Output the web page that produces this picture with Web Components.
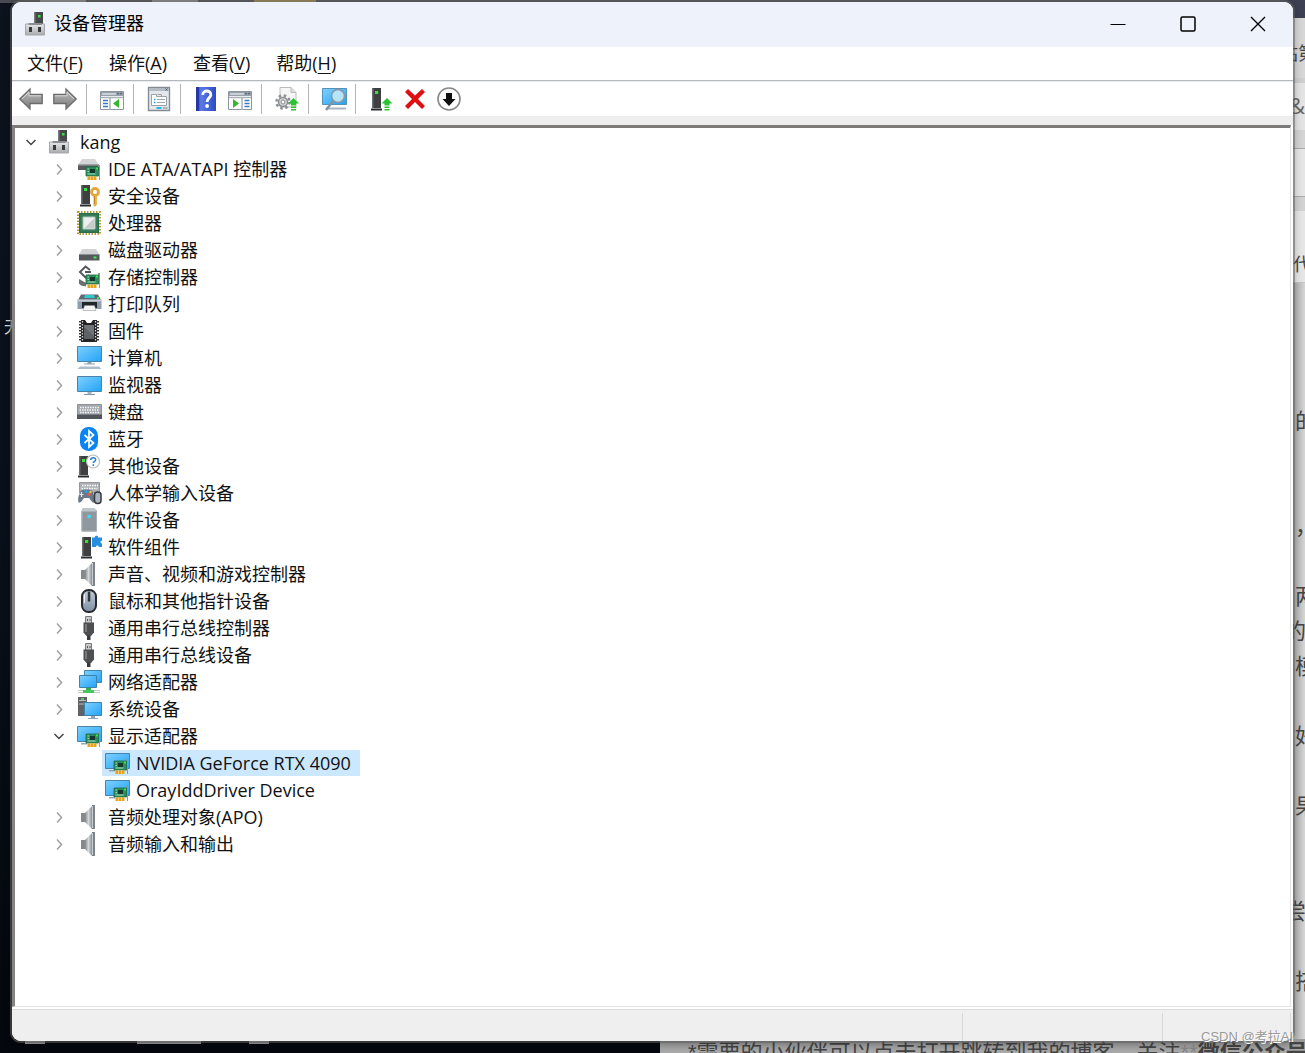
<!DOCTYPE html>
<html lang="zh-CN">
<head>
<meta charset="utf-8">
<title>设备管理器</title>
<style>
html,body{margin:0;height:100%;overflow:hidden}
body{font:18px/27px "Open Sans","Noto Sans CJK SC",sans-serif;color:#111}
</style>
</head>
<body>
<desk-top>
  <back-drop slot="behind"></back-drop>
  <app-window>
    <title-bar slot="title" heading="设备管理器"></title-bar>
    <menu-bar slot="menu">
      <menu-entry key="F">文件</menu-entry>
      <menu-entry key="A">操作</menu-entry>
      <menu-entry key="V">查看</menu-entry>
      <menu-entry key="H">帮助</menu-entry>
    </menu-bar>
    <tool-bar slot="tools">
      <tool-button icon="back" label="后退"></tool-button>
      <tool-button icon="forward" label="前进"></tool-button>
      <tool-split></tool-split>
      <tool-button icon="paneLeft" label="显示/隐藏控制台树"></tool-button>
      <tool-split></tool-split>
      <tool-button icon="props" label="属性"></tool-button>
      <tool-split></tool-split>
      <tool-button icon="help" label="帮助"></tool-button>
      <tool-button icon="paneRight" label="显示/隐藏操作窗格"></tool-button>
      <tool-split></tool-split>
      <tool-button icon="update" label="更新驱动程序"></tool-button>
      <tool-split></tool-split>
      <tool-button icon="scan" label="扫描检测硬件改动"></tool-button>
      <tool-split></tool-split>
      <tool-button icon="enable" label="启用设备"></tool-button>
      <tool-button icon="remove" label="卸载设备"></tool-button>
      <tool-button icon="disable" label="禁用设备"></tool-button>
    </tool-bar>
    <device-tree>
      <tree-node icon="pc" label="kang" state="open">
        <tree-node icon="ide" label="IDE ATA/ATAPI 控制器" state="closed"></tree-node>
        <tree-node icon="security" label="安全设备" state="closed"></tree-node>
        <tree-node icon="cpu" label="处理器" state="closed"></tree-node>
        <tree-node icon="disk" label="磁盘驱动器" state="closed"></tree-node>
        <tree-node icon="storage" label="存储控制器" state="closed"></tree-node>
        <tree-node icon="printer" label="打印队列" state="closed"></tree-node>
        <tree-node icon="firmware" label="固件" state="closed"></tree-node>
        <tree-node icon="computer" label="计算机" state="closed"></tree-node>
        <tree-node icon="monitor" label="监视器" state="closed"></tree-node>
        <tree-node icon="keyboard" label="键盘" state="closed"></tree-node>
        <tree-node icon="bluetooth" label="蓝牙" state="closed"></tree-node>
        <tree-node icon="other" label="其他设备" state="closed"></tree-node>
        <tree-node icon="hid" label="人体学输入设备" state="closed"></tree-node>
        <tree-node icon="soft" label="软件设备" state="closed"></tree-node>
        <tree-node icon="component" label="软件组件" state="closed"></tree-node>
        <tree-node icon="speaker" label="声音、视频和游戏控制器" state="closed"></tree-node>
        <tree-node icon="mouse" label="鼠标和其他指针设备" state="closed"></tree-node>
        <tree-node icon="usb" label="通用串行总线控制器" state="closed"></tree-node>
        <tree-node icon="usb" label="通用串行总线设备" state="closed"></tree-node>
        <tree-node icon="network" label="网络适配器" state="closed"></tree-node>
        <tree-node icon="system" label="系统设备" state="closed"></tree-node>
        <tree-node icon="display" label="显示适配器" state="open">
          <tree-node icon="display" label="NVIDIA GeForce RTX 4090" selected></tree-node>
          <tree-node icon="display" label="OrayIddDriver Device"></tree-node>
        </tree-node>
        <tree-node icon="speaker" label="音频处理对象(APO)" state="closed"></tree-node>
        <tree-node icon="speaker" label="音频输入和输出" state="closed"></tree-node>
      </tree-node>
    </device-tree>
    <status-bar slot="status"></status-bar>
  </app-window>
  <water-mark slot="over">CSDN @考拉AI</water-mark>
</desk-top>

<script>
const grads = `<defs>
<linearGradient id="b" x1="0" y1="0" x2="1" y2="1"><stop offset="0" stop-color="#7fd0ff"/><stop offset="1" stop-color="#22a3f5"/></linearGradient>
<linearGradient id="g" x1="0" y1="0" x2="0" y2="1"><stop offset="0" stop-color="#e6e7e9"/><stop offset="1" stop-color="#a9abae"/></linearGradient>
<linearGradient id="s" x1="0" y1="0" x2="1" y2="0"><stop offset="0" stop-color="#7f868c"/><stop offset=".5" stop-color="#d5d8da"/><stop offset="1" stop-color="#8a9095"/></linearGradient>
<linearGradient id="h" x1="0" y1="0" x2="1" y2="0"><stop offset="0" stop-color="#2334a0"/><stop offset=".25" stop-color="#5b7be6"/><stop offset="1" stop-color="#2c4bc4"/></linearGradient>
<linearGradient id="a" x1="0" y1="0" x2="0" y2="1"><stop offset="0" stop-color="#bdbdbd"/><stop offset="1" stop-color="#7b7b7b"/></linearGradient>
<linearGradient id="m" x1="0" y1="0" x2="0" y2="1"><stop offset="0" stop-color="#c3ccd8"/><stop offset="1" stop-color="#7d8fa5"/></linearGradient></defs>`;

const card = `<g><path d="M21 8h2v15h-1V10h-1z" fill="#8f979b"/><path d="M9 10h12.500v9H9z" fill="#2f8d5e" stroke="#1d6a45" stroke-width=".8"/><path d="M13 12h5v4h-5z" fill="#14382b"/><path d="M10.500 12h1.500M10.500 14.500h1.500M10.500 17h8" stroke="#a8dcbf"/><path d="M19 10.500h2v2h-2z" fill="#39e24f"/><path d="M10.500 19.500h9V23h-9z" fill="#e9a31c"/><path d="M13.500 19.500V23M16.500 19.500V23" stroke="#fbd98a" stroke-width=".8"/></g>`;
const tower = (x, y, h) => `<path d="M${x} ${y}h9v${h}h-9z" fill="#3d3f41"/><path d="M${x} ${y}h1.500v${h}h-1.500z" fill="#6b6d70"/><path d="M${x - 1} ${y + h + .5}h11v2h-11z" fill="#2b2c2d"/><path d="M${x + 3} ${y + 3}h3.200v3h-3.200z" fill="#35e235"/>`;
const up = (x, y) => `<path d="M${x} ${y}l5.500 5.500h-3v2h-5v-2h-3z" fill="#2bc332"/><path d="M${x - 2.500} ${y + 8.500}h5v1.500h-5zM${x - 2.500} ${y + 11}h5v1.500h-5z" fill="#2bc332"/>`;

const icons = {
pc: `<path d="M9 0h9v12H9z" fill="#46484a"/><path d="M9 0h1.500v12H9z" fill="#77797b"/><path d="M13 3h2.500v2.500H13z" fill="#3ede3e"/><path d="M.5 12h19v11H.5z" fill="url(#g)" stroke="#a5a7aa"/><path d="M3.500 11h13v2h-13z" fill="#8c8e91"/><path d="M4 15h3v5H4zM13 15h3v5h-3z" fill="#3a3b3d"/>`,
ide: `<path d="M5 2h13l4 6H1z" fill="#d2d4d6"/><path d="M1 7.500h21V13H1z" fill="#57595c"/><path d="M1 7h21v1.500H1z" fill="#a0a3a6"/>${card}`,
security: `${tower(4, 1, 19)}<circle cx="18" cy="8" r="3.500" fill="none" stroke="#e1a63c" stroke-width="2.800"/><path d="M16.500 11h3.400v9.500l-1.900 2.500-1.500-1.500z" fill="#e8b04a"/><path d="M17.500 12v8" stroke="#b57917" stroke-width=".8"/>`,
cpu: `<rect x="1" y="1" width="22" height="22" fill="none" stroke="#b99536" stroke-width="2" stroke-dasharray="1.500 1.500"/><path d="M2 2h20v20H2z" fill="#27704b"/><path d="M3.500 3.500h17v17h-17z" fill="#387f5b"/><path d="M6 6h12v12H6z" fill="#ecefed"/><path d="M7.500 17L17 7.500V17z" fill="#c6ccc8"/><path d="M6 6h12v12H6z" fill="none" stroke="#b3c1b9"/>`,
disk: `<path d="M5 11h14l3.500 6H2z" fill="#d0d2d4"/><path d="M2 16.500h20.500v6H2z" fill="#56595b"/><path d="M2 16h20.500v1H2z" fill="#8c8f92"/><path d="M16.500 18.500h3v2h-3z" fill="#49ee4e"/>`,
storage: `<path d="M13 5L8.500 1.500 3 7l5.500 5.500L12 10M8 7h6" fill="none" stroke="#55585b" stroke-width="2"/><path d="M2 14l7 4v3.500l-5-1-2-2z" fill="#6c6f72"/>${card}`,
printer: `<path d="M4 2.500h17l3 5.500H1z" fill="#5d6872"/><path d="M8 3h9l1 3H7z" fill="#31c8c9"/><path d="M20 5h2v2h-2z" fill="#3ee84f"/><path d="M.5 7.500h24V17H.5z" fill="#8f9cab"/><path d="M.5 7.500h24v2H.5z" fill="#c4cdd7"/><path d="M5 10h15v6H5z" fill="#22262a"/><path d="M7.500 13.500h10l1.500 5H6z" fill="#f3f4f5" stroke="#888" stroke-width=".5"/>`,
firmware: `<path d="M4 1h4l2 3h4l2-3h4v22H4z" fill="#222325"/><path d="M7 6h10v14H7z" fill="#5e6164"/><path d="M7 8l10 9V6H7z" fill="#727578"/><path d="M3.500 2v21M20.500 2v21" stroke="#333" stroke-width="3" stroke-dasharray="1.500 1.500"/><path d="M5.500 2v21M18.500 2v21" stroke="#d9d9d9" stroke-width="1.200" stroke-dasharray="1.500 1.500"/>`,
computer: `<path d="M.5 .5h24v15H.5z" fill="url(#b)" stroke="#4a83a8"/><path d="M10.500 16h4v1.500h-4zM7 17.500h11v1H7z" fill="#92a3b4"/><path d="M3 20.500h19l2.500 2.500H.5z" fill="#aebccd"/>`,
monitor: `<path d="M.5 3.500h24v15H.5z" fill="url(#b)" stroke="#4a83a8"/><path d="M10.500 19h4v2h-4z" fill="#a4b2bf"/><path d="M7 21h11v1H7z" fill="#8194a6"/>`,
keyboard: `<path d="M.5 4.500h24v14H.5z" fill="#a4a9ae" stroke="#8d9297"/><path d="M3 7.500h20M2.500 10h20M3 12.500h20" stroke="#f4f5f6" stroke-width="1.500" stroke-dasharray="1.500 1"/><path d="M0 14.500h25V19H0z" fill="#4f555b"/>`,
bluetooth: `<rect x="3" y="0" width="18" height="24" rx="8.500" fill="#0a84f5"/><path d="M7.500 8l9 8-4.500 4V4l4.500 4-9 8" fill="none" stroke="#fff" stroke-width="1.700"/>`,
other: `${tower(2, 2, 19)}<circle cx="16" cy="7.500" r="6.500" fill="#fff" stroke="#b8bcc0" stroke-width="1.200"/><path d="M13.800 6c0-3 4.800-3 4.800-.3 0 1.600-2.300 1.700-2.300 3.300m0 1.200v1.800" fill="none" stroke="#2b86d3" stroke-width="1.600"/>`,
hid: `<path d="M2.500 1.500h20v10h-20z" fill="#aeb2b6" stroke="#94989c"/><path d="M5 4.500h16M4.500 7.500h16" stroke="#fff" stroke-width="1.600" stroke-dasharray="1.500 1"/><path d="M4 9.500c3-1.500 8-1.500 11 0 2 3 3 8 2 12-2 1-4-4-5-4.500H7C6 18 4 22.500 1.500 21.500c-1-4 .5-9 2.500-12z" fill="#69798b"/><path d="M4.500 11v5M2.500 13.500h4" stroke="#dfe5ea" stroke-width="1.200"/><circle cx="9" cy="10.500" r="1.500" fill="#22a4f0"/><circle cx="12" cy="13.500" r="1.500" fill="#ef573f"/><circle cx="13.500" cy="11" r="1.200" fill="#ffc735"/><rect x="17.500" y="11" width="6.500" height="11.500" rx="3" fill="#a9b4bf" stroke="#363a3e" stroke-width="1.500"/>`,
soft: `<path d="M6 0h11l3 3v20.500H4.500V3z" fill="#8f989f"/><path d="M6 0h11l3 3.500H4.500z" fill="#c0c7cc"/><path d="M5 3.500h14.500V23H5z" fill="none" stroke="#a8b1b7"/><path d="M10.500 7h3.200v3h-3.200z" fill="#43dcf0"/>`,
component: `${tower(5, 2, 19)}<path d="M15 2.500h3c-1-2.500 4-2.500 3 0h4v3.500c-2-1-2 3 0 2.500V12h-3.500c1-2-3-2-2.500 0h-4z" fill="#278fe0"/>`,
speaker: `<path d="M4 8h4v9H4z" fill="#858a8f"/><path d="M8 8l7-7v23l-7-7z" fill="url(#s)"/><path d="M15 0h3v24h-3z" fill="#7b8288"/><path d="M15 1h1v22h-1z" fill="#c8ccd0"/>`,
mouse: `<rect x="5" y="1" width="14" height="22" rx="6.500" fill="url(#m)" stroke="#26292c" stroke-width="2"/><path d="M10.800 2.500h2.500v10h-2.500z" fill="#31363b"/><path d="M7.500 5v9" stroke="#e7edf3"/>`,
usb: `<path d="M8.500.5h6v7h-6z" fill="#c9cbcd" stroke="#77797b"/><path d="M10 3h1v2h-1zM12.500 3h1v2h-1z" fill="#545658"/><path d="M6.500 6.500h10.500v10l-3 3.500H9.500l-3-3.500z" fill="#4d4f51"/><path d="M8 8h2v8H8z" fill="#77797b"/><path d="M10 19.500h3.500V24H10z" fill="#38393b"/>`,
network: `<path d="M7.500 .5h17v12h-17z" fill="url(#b)" stroke="#4386ad"/><path d="M2.500 5.500h17v12h-17z" fill="url(#b)" stroke="#3f83ab"/><path d="M1 20.500h22M1 22.500h22" stroke="#c3cbc7"/><path d="M9 18h5v3H9z" fill="#3aab52"/><path d="M6 20h11v3H6z" fill="#46c65f"/>`,
system: `<path d="M1 0h9v19H1z" fill="#606366"/><path d="M2 3.500h7M2 7h7" stroke="#b7babd"/><path d="M4 1h3v2H4z" fill="#47cf58"/><path d="M7.500 5.500h17v13h-17z" fill="url(#b)" stroke="#4082aa"/><path d="M14 19h4v2h-4zM11 21h10v1H11z" fill="#93a4b6"/>`,
display: `<path d="M.5 2.500h24v15H.5z" fill="url(#b)" stroke="#4a83a8"/><path d="M4 19h6v1.500H4z" fill="#95a8ba"/>${card}`,
back: `<path d="M.8 12L11 2v5.500h12.200v9H11V22z" fill="url(#a)" stroke="#6b6b6b" stroke-width="1.300"/><path d="M3 12l7-7v3.800h12" fill="none" stroke="#d8d8d8"/>`,
forward: `<path d="M23.200 12L13 2v5.500H.8v9H13V22z" fill="url(#a)" stroke="#6b6b6b" stroke-width="1.300"/><path d="M2 8.800h12V5l7 7" fill="none" stroke="#d8d8d8"/>`,
paneLeft: `<path d="M.5 4.500h23v18H.5z" fill="#fff" stroke="#8c96a0"/><path d="M1 5h22v4H1z" fill="#96a0aa"/><path d="M2 7h14" stroke="#fff" /><path d="M17 6.500h2M20 6.500h2" stroke="#5c6b79" stroke-width="1.500"/><path d="M1 10.500h22M10 10v13" stroke="#a7b0b9" stroke-width="1.500"/><path d="M3 13.500h5M3 16.500h5M3 19.500h5" stroke="#367bc2" stroke-width="1.500"/><path d="M19 12v9l-6-4.500z" fill="#35b72d"/>`,
paneRight: `<path d="M.5 4.500h23v18H.5z" fill="#fff" stroke="#8c96a0"/><path d="M1 5h22v4H1z" fill="#96a0aa"/><path d="M2 7h14" stroke="#fff"/><path d="M17 6.500h2M20 6.500h2" stroke="#5c6b79" stroke-width="1.500"/><path d="M1 10.500h22M14 10v13" stroke="#a7b0b9" stroke-width="1.500"/><path d="M16.500 13.500h5M16.500 16.500h5M16.500 19.500h5" stroke="#367bc2" stroke-width="1.500"/><path d="M5 12v9l6-4.500z" fill="#35b72d"/>`,
props: `<path d="M1.500.5h21v23h-21z" fill="#e4e8eb" stroke="#848d95" stroke-width="1.400"/><path d="M2 1h20v3H2z" fill="#b4bcc3"/><path d="M18.500 1.500l2 2m0-2l-2 2" stroke="#4c555d"/><path d="M4.500 7.500h5v2h10v9h-15z" fill="#fff" stroke="#9aa3aa"/><path d="M10.500 7.500h4v2" fill="none" stroke="#9aa3aa"/><path d="M7 12.500h1.500M7 15.500h1.500" stroke="#2a9fe6" stroke-width="1.500"/><path d="M10 12.500h8M10 15.500h8" stroke="#9ba5ad"/><path d="M9.500 20h5v2h-5z" fill="#24b9ee"/><path d="M16 20h4.500v2H16z" fill="#aab3bb"/>`,
help: `<path d="M2 0h20v24H2z" fill="url(#h)"/><path d="M2 0h3v24H2z" fill="#2437a5"/><path d="M8.800 8c-.3-5.500 8.500-5.200 8 0-.3 3-3.700 3-3.700 7" fill="none" stroke="#fff" stroke-width="2.800"/><circle cx="13.100" cy="19" r="1.900" fill="#fff"/>`,
update: `<path d="M5 .5h11l5 5V20H5z" fill="#f6f6f6" stroke="#bcbcbc"/><path d="M16 .5v5h5" fill="#ddd" stroke="#bcbcbc"/><circle cx="8" cy="15" r="6.500" fill="none" stroke="#8c8f92" stroke-width="2.500" stroke-dasharray="2.500 2.600"/><circle cx="8" cy="15" r="4.500" fill="#d4d6d8" stroke="#8c8f92" stroke-width="1.500"/><circle cx="8" cy="15" r="2" fill="#fff" stroke="#888"/>${up(18.500, 11)}`,
scan: `<path d="M.5 1.500h24v16H.5z" fill="url(#b)" stroke="#5592b8"/><path d="M4 20.500h20v2H4z" fill="#a8b6c1"/><circle cx="16" cy="9" r="6.500" fill="#b6e4fd" stroke="#8799a6" stroke-width="1.600"/><path d="M11 14l-7 9" stroke="#8495a2" stroke-width="2.500"/>`,
enable: `${tower(3, 1, 20)}${up(18, 11)}`,
remove: `<path d="M5 2l7 6.500L19 2l3 3-7 7 7 7-3 3-7-7-7 7-3-3 7-7-7-7z" fill="#df1014"/>`,
disable: `<circle cx="12" cy="12" r="11" fill="#fff" stroke="#888" stroke-width="1.600"/><path d="M9 6h6v6h3.500L12 19l-6.500-7H9z" fill="#111"/>`
};

const define = (name, build) => customElements.define(name, class extends HTMLElement {
  constructor() { super(); this.attachShadow({mode: "open"}); }
  connectedCallback() { this.shadowRoot.innerHTML = build(this); if (this.ready) this.ready(); }
});

define("sys-icon", el => `<style>:host{display:block;width:24px;height:24px;flex:none}svg{display:block;overflow:visible}</style>
<svg width="24" height="24" viewBox="0 0 24 24" aria-hidden="true">${grads}${icons[el.getAttribute("name")]}</svg>`);

define("desk-top", () => `<style>
:host{display:grid;position:relative;box-sizing:border-box;height:100vh;padding:2px 12px 12px;background:#070b12;overflow:hidden}
::slotted(app-window){z-index:1}
</style><slot name="behind"></slot><slot></slot><slot name="over"></slot>`);

define("back-drop", () => `<style>
:host{position:absolute;inset:0;display:grid;grid-template:minmax(0,1fr) 14px / minmax(0,1fr) 25px;font-size:22px;line-height:35px;color:#444;overflow:hidden}
.wall{background:linear-gradient(#4a4b52 3px,transparent 3px),linear-gradient(#0c131d,#0a1019 50%,#04070d);color:#ddd}
.wall p{margin:0;padding:308px 0 0 4px;font-size:16px}
.top{display:flex;gap:66px;padding-left:40px;height:2px}
.top i{width:46px;background:#aaa}.top i:nth-child(3){background:#c5a44f;width:62px;margin-left:-10px}
.side{background:linear-gradient(90deg,#aaa 13px,#d6d6d6);display:flex;flex-direction:column;overflow:hidden;white-space:nowrap}
.side div{flex:none;box-sizing:border-box}
.line{height:35px;padding-left:15px}
.cut{padding-left:4px}
.small{font-size:18px}
.nav{height:18px;background:#3c4052}
.tabs{height:60px;padding-top:18px;background:#d6d6d6}
.tools{height:52px;padding-top:5px;padding-left:9px;background:#e4e4e4;border-top:5px solid #cfcfcf;color:#666}
.gap{height:19px;background:#d4d4d4;border-bottom:1px solid #aaa}
.field{height:48px;background:#e6e6e6;border-bottom:1px solid #aaa}
.head{height:86px;padding-top:36px;padding-left:13px;background:#e6e6e6;border-top:14px solid #d2d2d2;border-bottom:1px solid #c5c5c5}
.space{height:120px}
.foot{grid-column:1/-1;display:grid;grid-template-columns:660px minmax(0,1fr);overflow:hidden;background:#04070d}
.chips{display:grid;grid-template-columns:112px 112px 112px;padding-left:25px;align-items:start}
.chips i{width:20px;height:5px;background:#9a9da3}
.chips i:nth-child(2){width:64px}
.text{background:linear-gradient(#999,#bcbcbc);white-space:nowrap;padding-left:28px;font-family:"Liberation Sans","Noto Sans CJK SC",sans-serif;line-height:27px}
.text span{color:#888}
</style>
<div class="wall"><div class="top"><i></i><i></i><i></i></div><p>无</p></div>
<div class="side"><div class="nav"></div><div class="tabs small">站第</div><div class="tools">&amp;</div><div class="gap"></div><div class="field"></div>
<div class="head small">代</div><div class="space"></div>
<div class="line">的</div><div class="line"></div><div class="line"></div><div class="line">，</div><div class="line"></div><div class="line">两</div><div class="line cut">的</div><div class="line">模</div><div class="line"></div><div class="line">好</div><div class="line"></div><div class="line">果</div><div class="line"></div><div class="line"></div><div class="line cut">尝试</div><div class="line"></div><div class="line">搭</div></div>
<div class="foot"><div class="chips"><i></i><i></i><i></i></div><div class="text">*需要的小伙伴可以点击打开跳转到我的博客，关注<span>**</span><b>微信公众号</b><span>*</span></div></div>`);

define("app-window", () => `<style>
:host{display:flex;flex-direction:column;min-width:0;min-height:0;border-radius:9px;overflow:hidden;background:#fff;box-shadow:0 0 0 2px rgba(100,100,100,.55),0 2px 10px rgba(0,0,0,.35)}
</style><slot name="title"></slot><slot name="menu"></slot><slot name="tools"></slot><slot></slot><slot name="status"></slot>`);

define("title-bar", el => `<style>
:host{display:flex;align-items:center;box-sizing:border-box;height:45px;padding:0 0 2px 13px;gap:5px;background:#eef3fb;color:#000}
h1{flex:1;margin:0;font-size:18px;line-height:27px;font-weight:400}
button{width:70px;height:43px;margin:0;padding:0;border:0;background:none;display:grid;place-items:center}
.ctl{display:flex}
</style><sys-icon name="pc"></sys-icon><h1>${el.getAttribute("heading")}</h1><div class="ctl">
<button aria-label="最小化"><svg width="16" height="16"><path d="M.5 8.500h15" stroke="#000"/></svg></button>
<button aria-label="最大化"><svg width="16" height="16"><rect x="1" y="1" width="14" height="14" rx="1.500" fill="none" stroke="#000" stroke-width="1.500"/></svg></button>
<button aria-label="关闭"><svg width="16" height="16"><path d="M1 1l14 14M15 1L1 15" stroke="#000" stroke-width="1.400"/></svg></button></div>`);

define("menu-bar", () => `<style>:host{display:flex;gap:26px;height:33px;align-items:center;padding-left:15px;background:#fff;border-bottom:1px solid #b8b8b8}</style><slot></slot>`);
define("menu-entry", el => `<style>:host{display:block}button{font:inherit;color:inherit;border:0;background:none;padding:0;margin:0;display:block}u{text-underline-offset:3px;text-decoration-thickness:1px}</style><button><slot></slot>(<u>${el.getAttribute("key")}</u>)</button>`);

define("tool-bar", () => `<style>:host{display:flex;align-items:center;height:34px;padding-left:2px;background:#fff;border-top:1px solid #e6eaf2;border-bottom:9px solid #eee}</style><slot></slot>`);
define("tool-button", el => `<style>:host{display:block}button{width:34px;height:30px;padding:0;border:0;background:none;display:grid;place-items:center}</style><button aria-label="${el.getAttribute("label")}"><sys-icon name="${el.getAttribute("icon")}"></sys-icon></button>`);
define("tool-split", () => `<style>:host{display:block;width:1px;height:30px;margin:0 8px 0 4px;background:#b5b5b5}</style>`);

define("device-tree", () => `<style>:host{display:block;flex:1;min-height:0;overflow:hidden;padding-left:6px;margin-right:2px;background:#fff;border:solid;border-width:3px 1px 1px 3px;border-color:#7d7a7a #e2e2e2 #e2e2e2 #868383}</style><div role="tree"><slot></slot></div>`);

define("tree-node", el => {
  const state = el.getAttribute("state");
  el.ready = () => {
    const b = el.shadowRoot.querySelector("button");
    if (b) b.onclick = () => { el.setAttribute("state", el.getAttribute("state") === "open" ? "closed" : "open"); el.connectedCallback(); };
  };
  return `<style>
:host{display:block}
.row{display:flex;align-items:center;height:27px}
.chev{width:20px;height:26px;flex:none;padding:0;border:0;background:none;display:grid;place-items:center}
.item{display:flex;align-items:center;gap:7px;height:26px;margin-left:5px;padding:0 9px 0 3px;white-space:nowrap;line-height:26px}
.sel{background:#cce8ff}
.kids{padding-left:28px}
</style><div role="treeitem"><div class="row">
${state ? `<button class="chev" aria-label="${state === "open" ? "折叠" : "展开"}"><svg width="12" height="12">${state === "open" ? '<path d="M1.500 4L6 8.500 10.500 4" fill="none" stroke="#444" stroke-width="1.500"/>' : '<path d="M4 1.500L8.500 6.500 4 11.500" fill="none" stroke="#a0a0a0" stroke-width="1.500"/>'}</svg></button>` : '<span class="chev"></span>'}
<div class="item${el.hasAttribute("selected") ? " sel" : ""}"><sys-icon name="${el.getAttribute("icon")}"></sys-icon><span>${el.getAttribute("label")}</span></div></div>
${state === "open" ? '<div class="kids" role="group"><slot></slot></div>' : ""}</div>`;
});

define("status-bar", () => `<style>:host{display:grid;grid-template-columns:minmax(0,1fr) 200px 128px 2px;height:31px;margin-top:2px;background:#efefef;border-top:1px solid #dcdcdc}
i{border-right:1px solid #d8d8d8;margin-top:3px}</style><i></i><i></i><i></i>`);

define("water-mark", () => `<style>:host{position:absolute;right:12px;bottom:6px;z-index:2;font:13px/20px "Liberation Sans","Noto Sans CJK SC",sans-serif;color:#999;text-shadow:1px 1px #fff;white-space:nowrap}</style><slot></slot>`);
</script>
</body>
</html>
